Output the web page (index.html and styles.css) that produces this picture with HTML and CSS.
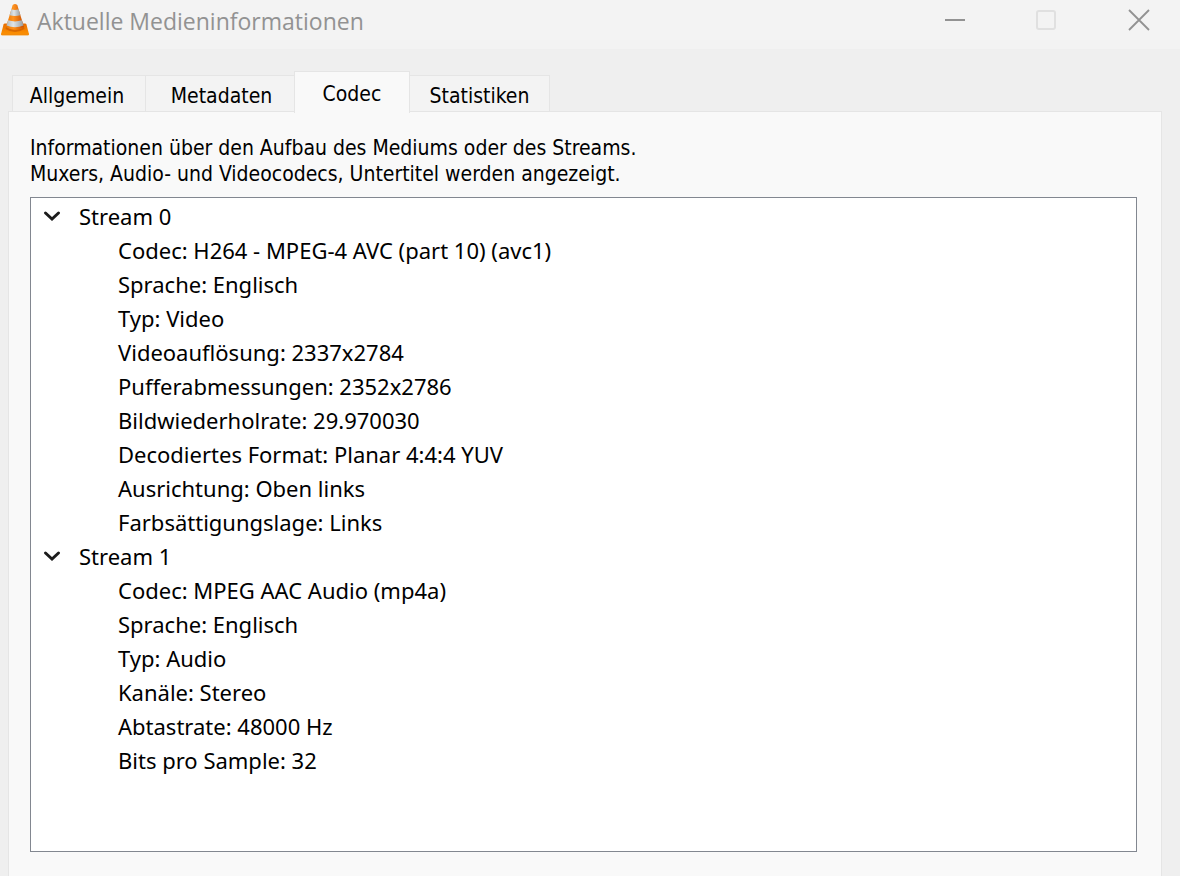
FILE: index.html
```html
<!DOCTYPE html>
<html lang="de">
<head>
<meta charset="utf-8">
<meta name="viewport" content="width=device-width, initial-scale=1">
<title>Aktuelle Medieninformationen</title>
<link rel="stylesheet" href="styles.css">
</head>
<body>
<header class="titlebar">
  <svg class="cone" viewBox="0 0 30 36" aria-hidden="true">
    <defs>
      <linearGradient id="orange" x1="0" x2="1" y1="0" y2="0"><stop offset="0" stop-color="#e87400"/><stop offset=".4" stop-color="#ff9420"/><stop offset="1" stop-color="#c84d00"/></linearGradient>
      <linearGradient id="white" x1="0" x2="1" y1="0" y2="0"><stop offset="0" stop-color="#b4babd"/><stop offset=".4" stop-color="#dfe4e6"/><stop offset="1" stop-color="#979da0"/></linearGradient>
      <linearGradient id="base" x1="0" x2="0" y1="0" y2="1"><stop offset="0" stop-color="#e86c00"/><stop offset="1" stop-color="#ff9500"/></linearGradient>
    </defs>
    <path d="M5 23.500h20q1.200 0 1.500 1l2.300 9q.2 1.800-1 1.800H2.200q-1.200 0-1-1.800l2.300-9q.3-1 1.500-1z" fill="url(#base)"/>
    <path d="M1.200 33.500h27.600v1.700H1.200z" fill="#f58a08"/>
    <path d="M6 27q9 6.500 18 0l.5 2q-9.500 6-19 0z" fill="#b94c00" opacity=".5"/>
    <path d="M12.700 5q2.300-1.800 4.600 0l6.700 22q-9 5-18 0z" fill="url(#orange)"/>
    <path d="M11.400 9.300q3.600 1.200 7.200 0l1.800 5.900q-5.400 1.600-10.800 0z" fill="url(#white)"/>
    <path d="M8.100 20.300q6.900 2.200 13.800 0l1.600 5.300q-8.500 3.200-17 0z" fill="url(#white)"/>
  </svg>
  <h1 class="title">Aktuelle Medieninformationen</h1>
  <div class="window-buttons">
    <button class="window-button" type="button" aria-label="Minimieren"><svg viewBox="0 0 22 22"><path d="M2 11h20" stroke="#929292" stroke-width="2"/></svg></button>
    <button class="window-button" type="button" aria-label="Maximieren" disabled><svg viewBox="0 0 22 22"><rect x="2" y="2" width="18" height="18" rx="2" fill="none" stroke="#e0e0e0" stroke-width="2"/></svg></button>
    <button class="window-button window-close" type="button" aria-label="Schließen"><svg viewBox="0 0 22 22"><path d="M1 1l20 20M21 1L1 21" stroke="#929292" stroke-width="1.800"/></svg></button>
  </div>
</header>
<main class="content">
  <div class="tabs" role="tablist">
    <button class="tab tab-general" type="button" role="tab" aria-selected="false">Allgemein</button>
    <button class="tab tab-meta" type="button" role="tab" aria-selected="false">Metadaten</button>
    <button class="tab tab-codec" type="button" role="tab" aria-selected="true" id="codec-tab" aria-controls="codec-panel">Codec</button>
    <button class="tab tab-stats" type="button" role="tab" aria-selected="false">Statistiken</button>
  </div>
  <section class="panel" role="tabpanel" id="codec-panel" aria-labelledby="codec-tab">
    <p class="intro">Informationen über den Aufbau des Mediums oder des Streams.<br>Muxers, Audio- und Videocodecs, Untertitel werden angezeigt.</p>
    <div class="tree">
      <details open>
        <summary class="stream"><svg class="chevron" viewBox="0 0 18 18" aria-hidden="true"><path d="M2.500 6L9 12l6.500-6" fill="none" stroke="#1c1c1c" stroke-width="3" stroke-linecap="round"/></svg>Stream 0</summary>
        <ul class="properties">
          <li>Codec: H264 - MPEG-4 AVC (part 10) (avc1)</li>
          <li>Sprache: Englisch</li>
          <li>Typ: Video</li>
          <li>Videoauflösung: 2337x2784</li>
          <li>Pufferabmessungen: 2352x2786</li>
          <li>Bildwiederholrate: 29.970030</li>
          <li>Decodiertes Format: Planar 4:4:4 YUV</li>
          <li>Ausrichtung: Oben links</li>
          <li>Farbsättigungslage: Links</li>
        </ul>
      </details>
      <details open>
        <summary class="stream"><svg class="chevron" viewBox="0 0 18 18" aria-hidden="true"><path d="M2.500 6L9 12l6.500-6" fill="none" stroke="#1c1c1c" stroke-width="3" stroke-linecap="round"/></svg>Stream 1</summary>
        <ul class="properties">
          <li>Codec: MPEG AAC Audio (mp4a)</li>
          <li>Sprache: Englisch</li>
          <li>Typ: Audio</li>
          <li>Kanäle: Stereo</li>
          <li>Abtastrate: 48000 Hz</li>
          <li>Bits pro Sample: 32</li>
        </ul>
      </details>
    </div>
  </section>
</main>
</body>
</html>
```
FILE: styles.css
```css
* { box-sizing: border-box; }

body {
  margin: 0;
  min-height: 100vh;
  display: flex;
  flex-direction: column;
  background: #efefef;
  color: #000;
  font-family: "Noto Sans", "Open Sans", sans-serif;
}

.titlebar {
  display: flex;
  align-items: flex-start;
  height: 49px;
  background: #f3f3f3;
}

.cone { width: 30px; height: 36px; flex: none; }

.title {
  margin: 0 0 0 7px;
  flex: 1;
  color: #929292;
  font-family: "Open Sans", "Noto Sans", sans-serif;
  font-size: 23px;
  font-weight: 400;
  line-height: 42px;
  white-space: nowrap;
}

.window-buttons { display: flex; }

.window-button {
  width: 92px;
  height: 40px;
  padding: 0;
  border: 0;
  background: none;
  display: grid;
  place-items: center;
}

.window-close { width: 88px; padding-left: 6px; }

.window-button svg { width: 22px; height: 22px; }

.content {
  flex: 1;
  display: flex;
  flex-direction: column;
  padding: 22px 18px 0 8px;
}

.tabs {
  display: flex;
  align-items: flex-end;
  padding-left: 4px;
}

.tab {
  height: 36px;
  padding: 5px 0 0;
  border: 1px solid #e5e5e5;
  border-width: 1px 0 0 1px;
  background: #f3f3f3;
  color: #000;
  font-family: "DejaVu Sans Condensed", "DejaVu Sans", sans-serif;
  font-size: 21px;
  line-height: 30px;
}

.tab-general { width: 133px; padding-right: 4px; }
.tab-meta { width: 149px; padding-left: 3px; }
.tab-codec { width: 116px; }
.tab-stats { width: 140px; border-right-width: 1px; }

.tab[aria-selected="true"] {
  height: 42px;
  margin-bottom: -2px;
  padding-bottom: 2px;
  border-right-width: 1px;
  background: #f9f9f9;
  z-index: 1;
}

.tab-codec + .tab { border-left-width: 0; }

.panel {
  flex: 1;
  display: flex;
  flex-direction: column;
  padding: 23px 24px 24px 21px;
  border: 1px solid #e5e5e5;
  border-bottom: 0;
  background: #f9f9f9;
}

.intro {
  margin: 0 0 10px;
  font-family: "DejaVu Sans Condensed", "DejaVu Sans", sans-serif;
  font-size: 21px;
  line-height: 26px;
}

.tree {
  flex: 1;
  padding: 1px 0;
  border: 1px solid #828790;
  background: #fff;
  font-size: 22px;
  line-height: 34px;
}

.stream {
  display: flex;
  align-items: center;
  gap: 18px;
  padding-left: 12px;
  list-style: none;
}

.chevron { width: 18px; height: 18px; }

.properties {
  margin: 0;
  padding: 0 0 0 87px;
  list-style: none;
}
```
